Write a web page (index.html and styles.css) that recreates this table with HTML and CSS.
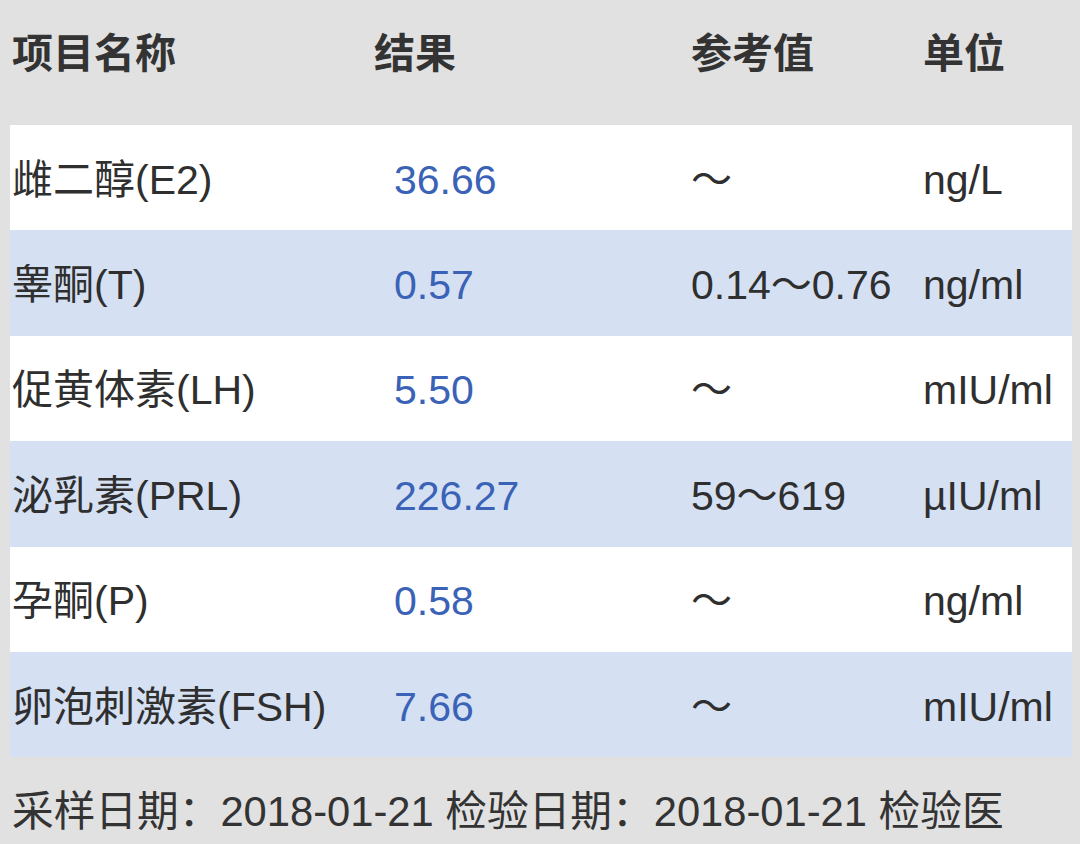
FILE: index.html
```html
<!DOCTYPE html>
<html lang="zh-CN">
<head>
<meta charset="utf-8">
<title>检验报告</title>
<link rel="stylesheet" href="styles.css">
</head>
<body>
<div class="page">
  <div class="head">
    <div class="h-name">项目名称</div>
    <div class="h-result">结果</div>
    <div class="h-ref">参考值</div>
    <div class="h-unit">单位</div>
  </div>
  <div class="table">
    <div class="row white">
      <div class="c-name">雌二醇(E2)</div>
      <div class="c-result">36.66</div>
      <div class="c-ref">～</div>
      <div class="c-unit">ng/L</div>
    </div>
    <div class="row blue">
      <div class="c-name">睾酮(T)</div>
      <div class="c-result">0.57</div>
      <div class="c-ref">0.14～0.76</div>
      <div class="c-unit">ng/ml</div>
    </div>
    <div class="row white">
      <div class="c-name">促黄体素(LH)</div>
      <div class="c-result">5.50</div>
      <div class="c-ref">～</div>
      <div class="c-unit">mIU/ml</div>
    </div>
    <div class="row blue">
      <div class="c-name">泌乳素(PRL)</div>
      <div class="c-result">226.27</div>
      <div class="c-ref">59～619</div>
      <div class="c-unit">µIU/ml</div>
    </div>
    <div class="row white">
      <div class="c-name">孕酮(P)</div>
      <div class="c-result">0.58</div>
      <div class="c-ref">～</div>
      <div class="c-unit">ng/ml</div>
    </div>
    <div class="row blue">
      <div class="c-name">卵泡刺激素(FSH)</div>
      <div class="c-result">7.66</div>
      <div class="c-ref">～</div>
      <div class="c-unit">mIU/ml</div>
    </div>
  </div>
  <div class="foot">采样日期：2018-01-21 检验日期：2018-01-21 检验医</div>
</div>
</body>
</html>
```

FILE: styles.css
```css
html, body {
  margin: 0;
  padding: 0;
  background: #e1e1e1;
}

body {
  width: 1080px;
  height: 844px;
  overflow: hidden;
  font-family: "Liberation Sans", "Noto Sans CJK SC", sans-serif;
  color: #2f2f2f;
  font-size: 41px;
}

.page {
  display: flex;
  flex-direction: column;
}

.head {
  display: grid;
  grid-template-columns: 362px 317px 232px 1fr;
  height: 125px;
  box-sizing: border-box;
  padding: 28px 0 0 12px;
  line-height: 52px;
  font-weight: 700;
  color: #333;
}

.table {
  margin: 0 8px 0 10px;
  display: flex;
  flex-direction: column;
}

.row {
  display: grid;
  grid-template-columns: 382px 297px 232px 1fr;
  align-items: center;
  box-sizing: border-box;
  height: 105.4px;
  padding: 4px 0 0 2px;
  line-height: 50px;
  white-space: nowrap;
}

.white {
  background: #ffffff;
}

.blue {
  background: #d5e0f3;
}

.c-result {
  color: #3a62b6;
}

.foot {
  padding: 30px 0 0 12px;
  font-size: 41.7px;
  line-height: 50px;
  white-space: nowrap;
  color: #333;
}
```
